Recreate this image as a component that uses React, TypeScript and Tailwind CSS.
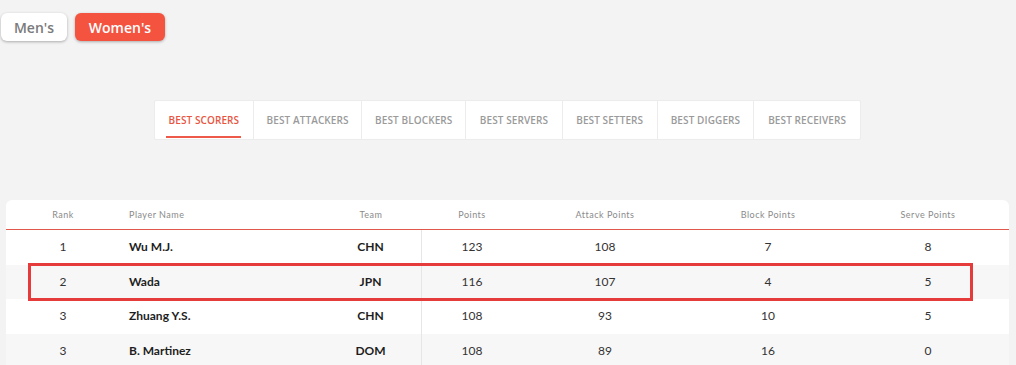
import React from "react";

const tabs = [
  { label: "BEST SCORERS", w: "w-[98px]", active: true },
  { label: "BEST ATTACKERS", w: "w-[109px]" },
  { label: "BEST BLOCKERS", w: "w-[104px]" },
  { label: "BEST SERVERS", w: "w-[97px]" },
  { label: "BEST SETTERS", w: "w-[95px]" },
  { label: "BEST DIGGERS", w: "w-[97px]" },
  { label: "BEST RECEIVERS", w: "w-[107px]" },
];

const rows = [
  ["1", "Wu M.J.", "CHN", "123", "108", "7", "8"],
  ["2", "Wada", "JPN", "116", "107", "4", "5"],
  ["3", "Zhuang Y.S.", "CHN", "108", "93", "10", "5"],
  ["3", "B. Martinez", "DOM", "108", "89", "16", "0"],
];

const grid = "grid grid-cols-[114px_200px_102px_100px_166px_160px_160px]";

export default function App() {
  return (
    <div
      className="w-[1016px] h-[365px] overflow-hidden bg-[#f3f3f3] relative"
      style={{ fontFamily: "Lato, 'Open Sans', sans-serif" }}
    >
      <div className="flex gap-[8px] pt-[13px] pl-[1px]">
        <button className="h-[28px] w-[66px] rounded-[6px] bg-white shadow-[0_1px_3px_rgba(0,0,0,0.3)] text-[14px] font-semibold text-[#7a7a7a] font-['Open_Sans',sans-serif]">
          Men's
        </button>
        <button className="h-[28px] w-[90px] rounded-[6px] bg-[#f4533f] shadow-[0_1px_3px_rgba(0,0,0,0.3)] text-[14px] font-semibold text-white font-['Open_Sans',sans-serif]">
          Women's
        </button>
      </div>

      <div className="mt-[59px] ml-[154px] flex w-[707px] h-[40px] bg-white border border-[#ececec] rounded-[2px]">
        {tabs.map((t, i) => (
          <div
            key={t.label}
            className={`${t.w} relative flex items-center justify-center text-[10px] font-semibold font-['Open_Sans',sans-serif] tracking-[0.1px] ${
              i > 0 ? "border-l border-[#ececec]" : ""
            } ${t.active ? "text-[#e8553f]" : "text-[#9a9a9a]"}`}
          >
            {t.label}
            {t.active && (
              <div className="absolute left-[11px] right-[12px] bottom-[1px] h-[2px] bg-[#ee5a4a]" />
            )}
          </div>
        ))}
      </div>

      <div className="relative mt-[60px] ml-[6px] w-[1003px] bg-white rounded-t-[6px] text-[#222]">
        <div className={`${grid} h-[30px] items-center text-[9px] text-[#8a8a8a] tracking-[0.5px] border-b border-[#e2574c]`}>
          <div className="text-center">Rank</div>
          <div className="pl-[9px]">Player Name</div>
          <div className="text-center">Team</div>
          <div className="text-center">Points</div>
          <div className="text-center">Attack Points</div>
          <div className="text-center">Block Points</div>
          <div className="text-center">Serve Points</div>
        </div>
        {rows.map((r, i) => (
          <div
            key={i}
            className={`${grid} h-[34.5px] items-center text-[12px] ${
              i % 2 === 1 ? "bg-[#f7f7f7]" : "bg-white"
            }`}
          >
            <div className="text-center text-[#333]">{r[0]}</div>
            <div className="pl-[9px] font-bold text-[#1e1e1e]">{r[1]}</div>
            <div className="text-center font-bold text-[#1e1e1e] border-r border-[#e6e6e6] h-full flex items-center justify-center">
              {r[2]}
            </div>
            <div className="text-center text-[#333]">{r[3]}</div>
            <div className="text-center text-[#333]">{r[4]}</div>
            <div className="text-center text-[#333]">{r[5]}</div>
            <div className="text-center text-[#333]">{r[6]}</div>
          </div>
        ))}
        <div className="absolute left-[22px] top-[63px] w-[945px] h-[38px] border-[3px] border-[#e53b3b]" />
      </div>
    </div>
  );
}
